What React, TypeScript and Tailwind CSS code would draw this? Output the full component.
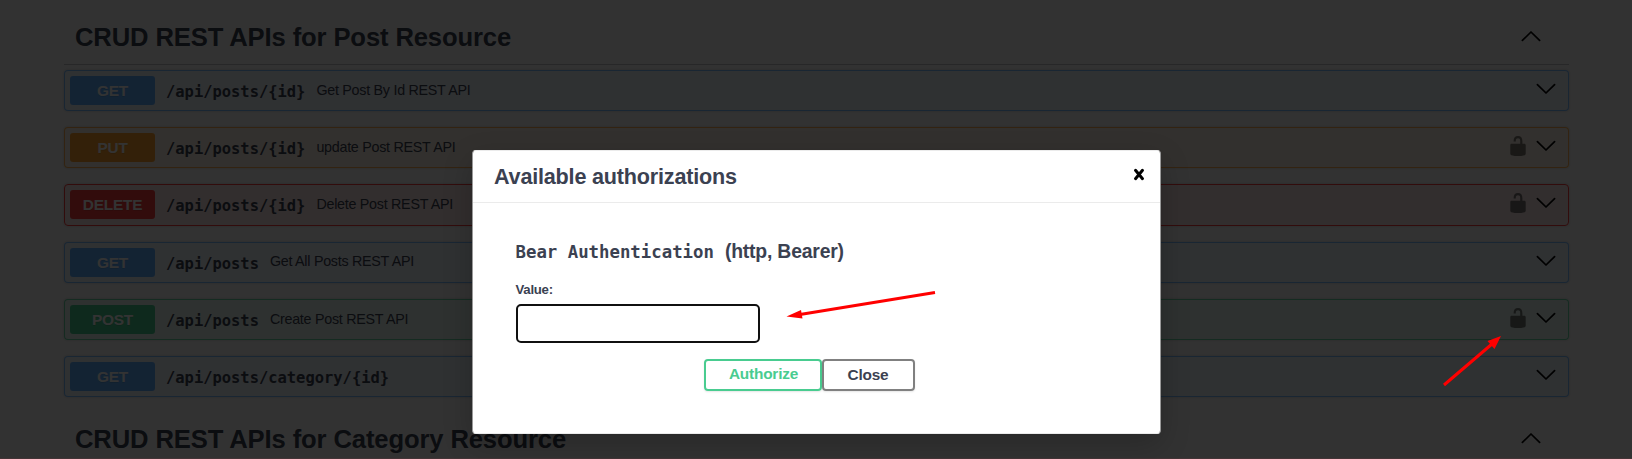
type Row = { method: string; path: string; summary?: string; locked?: boolean; box: string; badge: string };

const GET_BOX = 'border-[#61affe]/80 bg-[#61affe]/10';
const rows: Row[] = [
  { method: 'GET', path: '/api/posts/{id}', summary: 'Get Post By Id REST API', box: GET_BOX, badge: 'bg-[#61affe]' },
  { method: 'PUT', path: '/api/posts/{id}', summary: 'update Post REST API', locked: true, box: 'border-[#fca130]/80 bg-[#fca130]/10', badge: 'bg-[#fca130]' },
  { method: 'DELETE', path: '/api/posts/{id}', summary: 'Delete Post REST API', locked: true, box: 'border-[#f93e3e] bg-[#f93e3e]/10', badge: 'bg-[#f93e3e]' },
  { method: 'GET', path: '/api/posts', summary: 'Get All Posts REST API', box: GET_BOX, badge: 'bg-[#61affe]' },
  { method: 'POST', path: '/api/posts', summary: 'Create Post REST API', locked: true, box: 'border-[#49cc90]/80 bg-[#49cc90]/10', badge: 'bg-[#49cc90]' },
  { method: 'GET', path: '/api/posts/category/{id}', box: GET_BOX, badge: 'bg-[#61affe]' },
];

function Chevron({ up = false }: { up?: boolean }) {
  return (
    <svg width="20" height="12" viewBox="0 0 20 12" fill="none" stroke="#000" strokeWidth="1.7" strokeLinecap="round" strokeLinejoin="round">
      <path d={up ? 'M1.4 10.4 10 2l8.6 8.4' : 'M1.4 1.6 10 10l8.6-8.4'} />
    </svg>
  );
}

function Unlock() {
  return (
    <svg className="opacity-50" width="22" height="22" viewBox="0 0 20 20">
      <path d="M15.8 8H14V5.6C14 2.703 12.665 1 10 1 7.334 1 6 2.703 6 5.6V6h2v-.801C8 3.754 8.797 3 10 3c1.203 0 2 .754 2 2.199V8H4c-.553 0-1 .646-1 1.199V17c0 .549.428 1.139.951 1.307l1.197.387C5.672 18.861 6.55 19 7.1 19h5.8c.549 0 1.428-.139 1.951-.307l1.196-.387c.524-.167.953-.757.953-1.306V9.199C17 8.646 16.352 8 15.8 8z" />
    </svg>
  );
}

function Section({ title }: { title: string }) {
  return (
    <div className="flex h-[54px] items-center justify-between border-b border-[#3b4151]/30 pr-[28.5px] pl-[11px]">
      <h3 className="text-[25.6px] font-bold tracking-[-0.12px] whitespace-nowrap">{title}</h3>
      <div className="pb-1"><Chevron up /></div>
    </div>
  );
}

function Operation({ row }: { row: Row }) {
  return (
    <div className={`flex h-[41.2px] items-center rounded-[4px] border pr-[12.5px] pl-[5px] shadow-[0_0_3px_rgba(0,0,0,0.19)] ${row.box}`}>
      <span className={`h-[29px] w-[85px] rounded-[3px] text-center text-[15.4px] leading-[29px] font-bold tracking-[-0.2px] text-white [text-shadow:0_1px_0_rgba(0,0,0,0.1)] ${row.badge}`}>
        {row.method}
      </span>
      <span className="pt-[4px] pl-[11px] font-['DejaVu_Sans_Mono',monospace] text-[15.45px] font-bold">{row.path}</span>
      <span className="pl-[11px] text-[14.3px] tracking-[-0.27px]">{row.summary}</span>
      <div className="ml-auto flex items-center gap-[7px] pb-[3px]">
        {row.locked && <Unlock />}
        <Chevron />
      </div>
    </div>
  );
}

export default function App() {
  return (
    <div className="relative h-[459px] w-[1632px] overflow-hidden bg-[#fafafa] font-['Liberation_Sans',Arial,sans-serif] text-[#3b4151]">
      <main className="pt-[11px] pr-[63px] pl-[64px]">
        <Section title="CRUD REST APIs for Post Resource" />
        <div className="flex flex-col gap-4 pt-[5px]">
          {rows.map((row, i) => (
            <Operation key={i} row={row} />
          ))}
        </div>
        <div className="pt-4">
          <Section title="CRUD REST APIs for Category Resource" />
        </div>
      </main>

      <div className="absolute inset-0 border-b border-[#433436] bg-black/80" />

      <div role="dialog" className="absolute top-[150px] left-[472px] flex h-[284px] w-[689px] flex-col rounded-[4px] border border-x-[#999] border-y-[#ebebeb] bg-white shadow-[0_10px_30px_rgba(0,0,0,0.2)]">
        <header className="flex h-[52px] shrink-0 items-center justify-between border-b border-[#ebebeb] pr-[15px] pl-[21px]">
          <h3 className="pt-px text-[21.6px] font-bold tracking-[-0.2px]">Available authorizations</h3>
          <svg className="mb-1" width="12" height="13" viewBox="0 0 12 13" stroke="#000" strokeWidth="3" strokeLinecap="round">
            <path d="M2.5 2.3l7 8.4M9.500 2.3l-7 8.400" />
          </svg>
        </header>
        <div className="flex flex-col pt-[36px] pl-[42.5px]">
          <h4 className="flex h-6 items-baseline gap-[11px] font-bold whitespace-nowrap">
            <code className="font-['DejaVu_Sans_Mono',monospace] text-[17.35px] leading-6">Bear Authentication</code>
            <span className="text-[19.4px] leading-6 tracking-[-0.2px]">(http, Bearer)</span>
          </h4>
          <label className="mt-[17px] text-[13.2px] leading-5 font-bold tracking-[-0.25px]">Value:</label>
          <div className="mt-[4px] h-[39px] w-[244px] rounded-[5px] border-2 border-[#101010] bg-white" />
        </div>
        <div className="mt-4 flex justify-center pr-[15px] text-[15.4px] font-bold tracking-[-0.2px]">
          <button className="h-[32px] w-[118px] rounded-[4px] border-2 border-[#49cc90] pb-0.5 pl-0.5 text-[#49cc90] shadow-[0_1px_2px_rgba(0,0,0,0.1)]">Authorize</button>
          <button className="h-[32px] w-[93px] rounded-[4px] border-2 border-[#808080] shadow-[0_1px_2px_rgba(0,0,0,0.1)]">Close</button>
        </div>
      </div>

      <svg className="absolute inset-0" width="1632" height="459" viewBox="0 0 1632 459" fill="#f00" stroke="#f00">
        <path d="M935 292.500 800 314.500M1444 385l48-41" strokeWidth="3" />
        <path d="M786.500 316.500 801 310l1.500 8.500zM1501 336l-13.500 5 7 8z" stroke="none" />
      </svg>
    </div>
  );
}
